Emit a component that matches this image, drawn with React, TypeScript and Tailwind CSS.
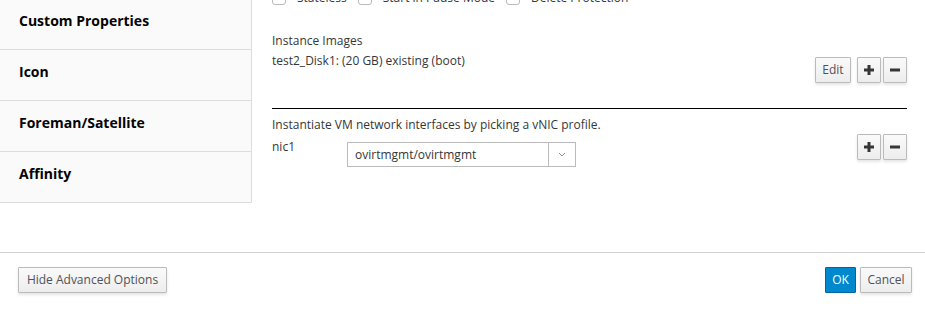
import { ReactNode } from 'react'

const tabs = ['Custom Properties', 'Icon', 'Foreman/Satellite', 'Affinity']

const Btn = ({ children, className = '' }: { children: ReactNode; className?: string }) => (
  <button
    className={`flex h-[26px] items-center justify-center rounded-[1px] border border-[#bbb] bg-linear-to-b from-[#fafafa] to-[#ededed] text-[12px] text-[#4d5258] shadow-[0_2px_3px_rgba(3,3,3,0.1)] ${className}`}
  >
    {children}
  </button>
)

const Plus = () => (
  <svg width="10" height="10" viewBox="0 0 10 10">
    <rect x="3.5" y="0" width="3" height="10" fill="#363636" />
    <rect x="0" y="3.5" width="10" height="3" fill="#363636" />
  </svg>
)

const Minus = () => (
  <svg width="10" height="10" viewBox="0 0 10 10">
    <rect x="0" y="3.5" width="10" height="3" fill="#363636" />
  </svg>
)

const PlusMinus = ({ className = '' }: { className?: string }) => (
  <div className={`flex gap-[2px] ${className}`}>
    <Btn className="w-[24px]"><Plus /></Btn>
    <Btn className="w-[24px]"><Minus /></Btn>
  </div>
)

const Check = ({ label }: { label: string }) => (
  <label className="flex items-center gap-[11px]">
    <span className="h-[14px] w-[14px] rounded-[3px] border border-[#bbb] bg-white" />
    <span>{label}</span>
  </label>
)

export default function App() {
  return (
    <div className="h-[310px] w-[925px] overflow-hidden bg-white font-['Open_Sans',sans-serif] text-[12px] text-[#363636]">
      <div className="flex h-[252px]">
        {/* vertical tabs */}
        <div className="-mt-px w-[252px] self-start border-r border-[#ddd] bg-[#fafafa]">
          {tabs.map((t) => (
            <div key={t} className="h-[51px] border-b border-[#ddd] pl-[19px] pt-[12px] text-[14px] leading-5 font-bold text-[#030303]">
              {t}
            </div>
          ))}
        </div>

        <div className="flex-1 pl-5 pr-[18px]">
          <div className="-mt-[9px] flex h-[14px] items-center gap-[11px] whitespace-nowrap">
            <Check label="Stateless" />
            <Check label="Start in Pause Mode" />
            <Check label="Delete Protection" />
          </div>

          <div className="mt-[26px] flex justify-between">
            <div className="leading-5">
              <div>Instance Images</div>
              <div>test2_Disk1: (20 GB) existing (boot)</div>
            </div>
            <div className="mt-[26px] flex gap-[6px]">
              <Btn className="w-[36px]">Edit</Btn>
              <PlusMinus />
            </div>
          </div>

          <div className="mt-[25px] border-t border-black" />

          <div className="mt-[6px] flex justify-between">
            <div>
              <div className="leading-5">Instantiate VM network interfaces by picking a vNIC profile.</div>
              <div className="mt-[2px] flex">
                <div className="w-[75px] leading-5">nic1</div>
                <div className="mt-[5px] flex h-[25px] w-[229px] border border-[#bbb] bg-white">
                  <div className="flex flex-1 items-center pl-[7px]">ovirtmgmt/ovirtmgmt</div>
                  <div className="flex w-[27px] items-center justify-center border-l border-[#bbb]">
                    <svg width="8" height="5" viewBox="0 0 8 5">
                      <path d="M1 1l3 3 3-3" fill="none" stroke="#8b8d8f" strokeWidth="1" />
                    </svg>
                  </div>
                </div>
              </div>
            </div>
            <PlusMinus className="mt-[19px]" />
          </div>
        </div>
      </div>

      <div className="flex justify-between border-t border-[#d1d1d1] pl-[18px] pr-[13px] pt-[14px]">
        <Btn className="w-[149px]">Hide Advanced Options</Btn>
        <div className="flex gap-[4px]">
          <button className="h-[26px] w-[31px] rounded-[1px] border border-[#00659c] bg-[#0088ce] text-[12px] text-white">OK</button>
          <Btn className="w-[52px]">Cancel</Btn>
        </div>
      </div>
    </div>
  )
}
